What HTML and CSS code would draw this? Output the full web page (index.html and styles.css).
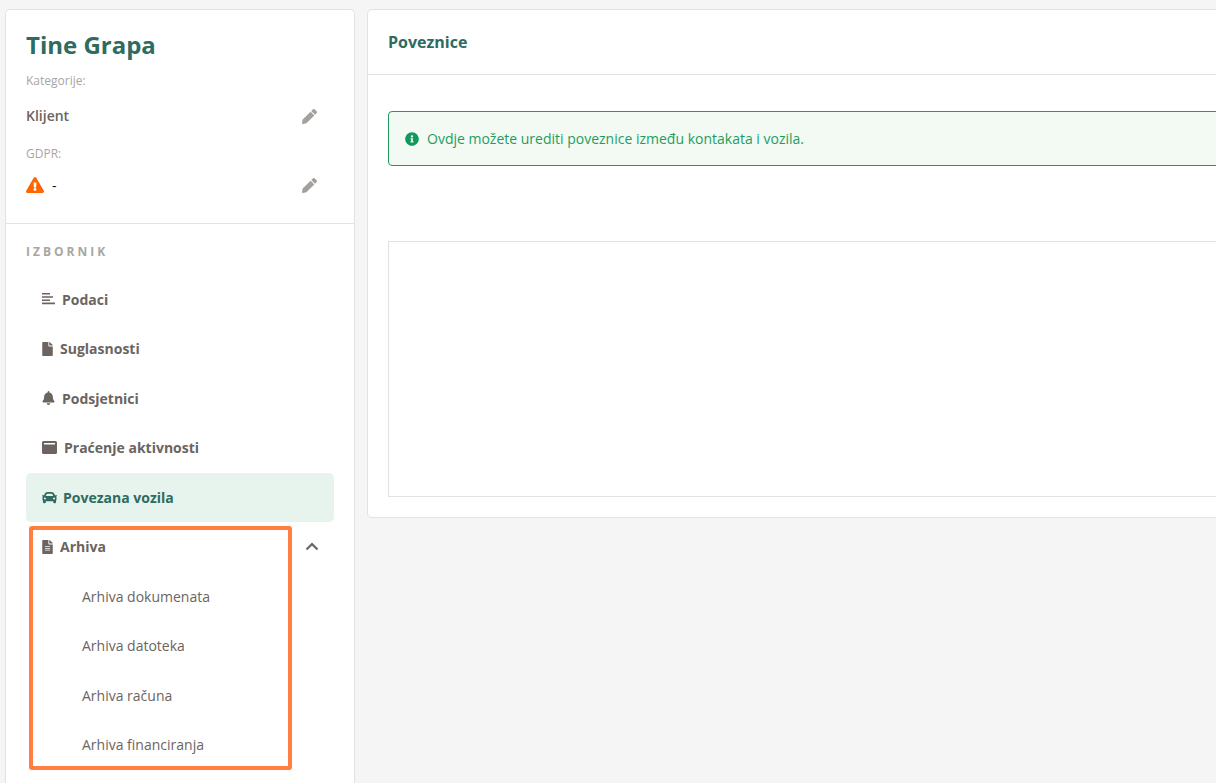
FILE: index.html
```html
<!DOCTYPE html>
<html lang="hr">
<head>
    <meta charset="UTF-8">
    <meta name="viewport" content="width=device-width, initial-scale=1.0">
    <title>Tine Grapa - Poveznice</title>
    <link rel="stylesheet" href="styles.css">
</head>
<body>
    <div class="page">
        <aside class="sidebar">
            <div class="contact">
                <h1 class="contact-name">Tine Grapa</h1>
                <div class="field-label">Kategorije:</div>
                <div class="field-row">
                    <span class="field-value">Klijent</span>
                    <svg class="pencil category-pencil" viewBox="0 0 512 512"><path d="M497.9 142.1l-46.1 46.1c-4.700 4.700-12.300 4.700-17 0l-111-111c-4.700-4.700-4.700-12.300 0-17l46.100-46.100c18.700-18.700 49.100-18.700 67.900 0l60.100 60.100c18.800 18.700 18.800 49.100 0 67.900zM284.200 99.800L21.600 362.400.4 483.900c-2.900 16.400 11.400 30.600 27.800 27.800l121.500-21.300 262.600-262.600c4.700-4.700 4.700-12.300 0-17l-111-111c-4.800-4.700-12.400-4.700-17.100 0z"/></svg>
                </div>
                <div class="field-label gdpr-label">GDPR:</div>
                <div class="field-row gdpr-row">
                    <span class="gdpr-value">
                        <svg class="warning" viewBox="0 0 576 512"><path d="M569.500 440C588 472 564.800 512 527.900 512H48.100c-36.900 0-60-40.100-41.600-72L246.400 24c18.500-32 64.700-32 83.200 0l239.900 416zM288 354c-25.400 0-46 20.600-46 46s20.600 46 46 46 46-20.600 46-46-20.600-46-46-46zm-43.700-165.300l7.400 136c.3 6.400 5.600 11.300 12 11.300h48.500c6.400 0 11.600-5 12-11.300l7.400-136c.4-6.900-5.100-12.700-12-12.700h-63.400c-6.900 0-12.300 5.800-11.900 12.700z"/></svg>
                        <span>-</span>
                    </span>
                    <svg class="pencil" viewBox="0 0 512 512"><path d="M497.900 142.100l-46.100 46.100c-4.700 4.700-12.300 4.700-17 0l-111-111c-4.700-4.700-4.700-12.300 0-17l46.100-46.100c18.700-18.700 49.100-18.700 67.900 0l60.100 60.100c18.800 18.700 18.800 49.100 0 67.900zM284.200 99.800L21.600 362.400.4 483.900c-2.900 16.400 11.400 30.600 27.800 27.800l121.500-21.300 262.600-262.600c4.700-4.700 4.700-12.300 0-17l-111-111c-4.800-4.700-12.400-4.700-17.100 0z"/></svg>
                </div>
            </div>

            <nav class="menu">
                <div class="menu-title">IZBORNIK</div>
                <a class="menu-item">
                    <svg class="menu-icon icon-wide" viewBox="0 0 13 13"><path d="M0 .5h8v1.600H0zM0 3.700h11v1.600H0zM0 6.900h8v1.600H0zM0 10.100h13v1.600H0z"/></svg>
                    <span class="item-label">Podaci</span>
                </a>
                <a class="menu-item">
                    <svg class="menu-icon" viewBox="0 0 384 512"><path d="M224 136V0H24C10.700 0 0 10.700 0 24v464c0 13.300 10.700 24 24 24h336c13.300 0 24-10.700 24-24V160H248c-13.200 0-24-10.800-24-24zm160-14.100v6.100H256V0h6.100c6.400 0 12.500 2.500 17 7l97.900 98c4.500 4.500 7 10.600 7 16.900z"/></svg>
                    <span class="item-label">Suglasnosti</span>
                </a>
                <a class="menu-item">
                    <svg class="menu-icon icon-wide" viewBox="0 0 448 512"><path d="M224 512c35.300 0 64-28.700 64-64H160c0 35.300 28.700 64 64 64zm215.400-149.700c-19.300-20.800-55.500-52-55.500-154.300 0-77.700-54.500-139.900-127.900-155.200V32c0-17.700-14.300-32-32-32s-32 14.300-32 32v20.800C118.600 68.100 64.100 130.300 64.100 208c0 102.300-36.200 133.500-55.500 154.300-6 6.400-8.700 14.100-8.600 21.700.1 16.400 13 32 32.100 32h383.800c19.100 0 32-15.600 32.100-32 .1-7.600-2.600-15.300-8.600-21.700z"/></svg>
                    <span class="item-label">Podsjetnici</span>
                </a>
                <a class="menu-item">
                    <svg class="menu-icon icon-card" viewBox="0 0 15 13"><path fill-rule="evenodd" d="M1.500 0h12A1.500 1.500 0 0 1 15 1.500v10a1.500 1.500 0 0 1-1.500 1.500h-12A1.500 1.500 0 0 1 0 11.500v-10A1.500 1.500 0 0 1 1.500 0zM2 2v1.500h11V2z"/></svg>
                    Praćenje aktivnosti
                </a>
                <a class="menu-item active">
                    <svg class="menu-icon icon-car" viewBox="0 48 512 416"><path d="M499.990 176h-59.870l-16.640-41.600C406.380 91.630 365.570 64 319.500 64h-127c-46.060 0-86.880 27.630-103.990 70.400L71.870 176H12.010C4.200 176-1.530 183.340.37 190.910l6 24C7.700 220.250 12.500 224 18.010 224h20.070C24.650 235.730 16 252.780 16 272v48c0 16.120 6.160 30.670 16 41.930V416c0 17.670 14.330 32 32 32h32c17.670 0 32-14.330 32-32v-32h256v32c0 17.670 14.330 32 32 32h32c17.670 0 32-14.330 32-32v-54.070c9.840-11.250 16-25.800 16-41.930v-48c0-19.220-8.650-36.270-22.070-48H494c5.510 0 10.310-3.750 11.640-9.090l6-24c1.890-7.570-3.840-14.910-11.650-14.910zm-352.060-17.830c7.290-18.220 24.940-30.170 44.570-30.170h127c19.630 0 37.280 11.950 44.570 30.170L384 208H128l19.930-49.830zM96 319.800c-19.200 0-32-12.760-32-31.900S76.800 256 96 256s48 28.710 48 47.850-28.800 15.950-48 15.950zm320 0c-19.200 0-48 3.190-48-15.950S396.800 256 416 256s32 12.760 32 31.900-12.800 31.900-32 31.900z"/></svg>
                    Povezana vozila
                </a>
                <a class="menu-item">
                    <svg class="menu-icon" viewBox="0 0 384 512"><path fill-rule="evenodd" d="M224 136V0H24C10.700 0 0 10.700 0 24v464c0 13.300 10.700 24 24 24h336c13.300 0 24-10.700 24-24V160H248c-13.200 0-24-10.800-24-24zm64 236c0 6.600-5.400 12-12 12H108c-6.600 0-12-5.400-12-12v-8c0-6.600 5.400-12 12-12h168c6.600 0 12 5.400 12 12v8zm0-64c0 6.600-5.400 12-12 12H108c-6.600 0-12-5.400-12-12v-8c0-6.600 5.400-12 12-12h168c6.600 0 12 5.400 12 12v8zm0-72v8c0 6.600-5.400 12-12 12H108c-6.600 0-12-5.400-12-12v-8c0-6.600 5.400-12 12-12h168c6.600 0 12 5.400 12 12z"/><path d="M384 121.900v6.100H256V0h6.100c6.400 0 12.500 2.500 17 7l97.900 98c4.500 4.500 7 10.600 7 16.900z"/></svg>
                    <span class="item-label">Arhiva</span>
                    <svg class="chevron" viewBox="0 0 14 9"><path d="M1.500 7.500L7 2l5.500 5.500" fill="none" stroke="currentColor" stroke-width="2.200"/></svg>
                </a>
                <div class="submenu">
                    <a class="submenu-item">Arhiva dokumenata</a>
                    <a class="submenu-item">Arhiva datoteka</a>
                    <a class="submenu-item">Arhiva računa</a>
                    <a class="submenu-item">Arhiva financiranja</a>
                </div>
                <div class="highlight"></div>
            </nav>
        </aside>

        <main class="content">
            <div class="content-header">Poveznice</div>
            <div class="content-body">
                <div class="alert">
                    <svg class="alert-icon" viewBox="0 0 512 512"><path d="M256 8C119 8 8 119.100 8 256c0 137 111 248 248 248s248-111 248-248C504 119.100 393 8 256 8zm0 110c23.200 0 42 18.800 42 42s-18.800 42-42 42-42-18.800-42-42 18.800-42 42-42zm56 254c0 6.600-5.400 12-12 12h-88c-6.600 0-12-5.400-12-12v-24c0-6.600 5.400-12 12-12h12v-64h-12c-6.600 0-12-5.400-12-12v-24c0-6.600 5.400-12 12-12h64c6.600 0 12 5.400 12 12v100h12c6.600 0 12 5.400 12 12v24z"/></svg>
                    Ovdje možete urediti poveznice između kontakata i vozila.
                </div>
                <div class="links-box"></div>
            </div>
        </main>
    </div>
</body>
</html>
```

FILE: styles.css
```css
html, body {
    height: 100%;
    overflow: hidden;
}

body {
    margin: 0;
    background: #f5f5f5;
    font-family: 'Open Sans', sans-serif;
    font-size: 14px;
    color: #6b6461;
}

.page {
    display: flex;
    align-items: flex-start;
    gap: 12px;
    padding: 9px 0 0 5px;
}

.sidebar {
    flex: none;
    box-sizing: border-box;
    width: 350px;
    height: 774px;
    background: #fff;
    border: 1px solid #e2e2e2;
    border-bottom: 0;
    border-radius: 5px 5px 0 0;
}

.contact {
    box-sizing: border-box;
    height: 214px;
    padding: 19px 20px 0;
    border-bottom: 1px solid #e2e2e2;
}

.contact-name {
    margin: 0;
    font-size: 24px;
    line-height: 32px;
    font-weight: 700;
    color: #2f6b5f;
}

.field-label {
    margin-top: 11px;
    font-size: 12px;
    line-height: 18px;
    color: #a9a5a2;
}

.gdpr-label {
    margin-top: 20px;
}

.field-row {
    display: flex;
    align-items: center;
    justify-content: space-between;
    height: 20px;
    margin-top: 15px;
    padding-right: 17px;
}

.gdpr-row {
    margin-top: 12px;
}

.field-value {
    font-weight: 600;
}

.gdpr-value {
    display: flex;
    align-items: center;
    gap: 8px;
    color: #111;
}

.pencil {
    width: 15px;
    height: 15px;
    fill: #a3a09d;
}

.category-pencil {
    margin-top: 2px;
}

.warning {
    width: 18px;
    height: 16px;
    fill: #ff6600;
}

.menu {
    position: relative;
    padding: 19px 20px 0;
}

.menu-title {
    height: 31.5px;
    font-size: 12px;
    line-height: 18px;
    font-weight: 700;
    letter-spacing: 3px;
    color: #a9a5a2;
}

.menu-item {
    display: flex;
    align-items: center;
    gap: 7px;
    padding: 14.25px 16px;
    line-height: 21px;
    font-weight: 700;
    border-radius: 5px;
}

.menu-item.active {
    background: #e7f3ed;
    color: #2f6b5f;
}

.item-label {
    display: block;
}

.menu-icon {
    flex: none;
    width: 11px;
    height: 14px;
    fill: currentColor;
}

.icon-wide {
    width: 13px;
}

.icon-card {
    width: 15px;
    height: 13px;
}

.icon-car {
    width: 15px;
    height: 13px;
    margin-right: -1px;
}

.chevron {
    width: 14px;
    height: 9px;
    margin-left: auto;
    margin-right: -1px;
    color: #6b6461;
}

.submenu-item {
    display: block;
    padding: 14.25px 16px 14.25px 56px;
    line-height: 21px;
}

.highlight {
    position: absolute;
    left: 23px;
    top: 302px;
    width: 255px;
    height: 236px;
    border: 4px solid #ff7f41;
    border-radius: 3px;
}

.content {
    flex: none;
    box-sizing: border-box;
    width: 900px;
    height: 509px;
    background: #fff;
    border: 1px solid #e2e2e2;
    border-radius: 5px;
}

.content-header {
    height: 64px;
    padding-left: 20px;
    border-bottom: 1px solid #e2e2e2;
    font-size: 16px;
    line-height: 64px;
    font-weight: 700;
    color: #2f6b5f;
}

.content-body {
    padding: 36px 20px 0;
}

.alert {
    display: flex;
    align-items: center;
    gap: 8px;
    box-sizing: border-box;
    height: 55px;
    padding-left: 16px;
    background: #f3f9f3;
    border: 1px solid #1f9d61;
    border-radius: 4px;
    color: #1f9d61;
}

.alert-icon {
    flex: none;
    width: 14px;
    height: 14px;
    fill: #109a5a;
}

.links-box {
    box-sizing: border-box;
    height: 256px;
    margin-top: 75px;
    border: 1px solid #e2e2e2;
}
```
